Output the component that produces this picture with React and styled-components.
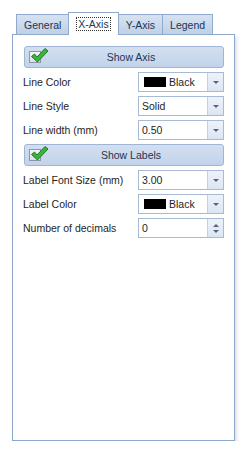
import styled, { createGlobalStyle, css } from 'styled-components';

const GlobalStyle = createGlobalStyle`
  body {
    margin: 0;
    background: #ffffff;
    font-family: 'Liberation Sans', Arial, sans-serif;
    font-size: 10.5px;
    color: #1e1e1e;
  }
`;

const Page = styled.div`
  padding: 12px 0 0 12px;
  width: 223px;
`;

const TabStrip = styled.div`
  align-items: flex-end;
  display: flex;
  height: 22px;
  padding-left: 4px;
  position: relative;
  z-index: 1;
`;

const Tab = styled.div`
  align-items: center;
  background: linear-gradient(#d6e2f1, #bfd1e8);
  border: 1px solid #8fa9cf;
  border-bottom: none;
  color: #1e3454;
  display: flex;
  height: 19px;
  margin-left: -1px;
  padding: 0 7px;

  &:first-child {
    margin-left: 0;
  }

  ${({ $active }) => $active && css`
    background: #ffffff;
    height: 22px;
    margin-bottom: -1px;
    padding: 0 8px;
    position: relative;
    z-index: 2;
  `}
`;

const FocusLabel = styled.span`
  outline: 1px dotted #333;
  outline-offset: 0;
  padding: 0 1px;
`;

const Panel = styled.div`
  border: 1px solid #8ca7cd;
  box-shadow: 2px 2px 3px rgba(0, 0, 0, 0.12);
  box-sizing: border-box;
  display: flex;
  flex-direction: column;
  gap: 4px;
  height: 407px;
  padding: 11px 10px 0 11px;
`;

const SectionButton = styled.div`
  align-items: center;
  background: linear-gradient(#d3dff0, #c2d3ea);
  border: 1px solid #9fb5d4;
  border-radius: 3px;
  box-sizing: border-box;
  display: flex;
  height: 22px;
  position: relative;
`;

const CheckBox = styled.span`
  background: linear-gradient(#f3f6fa, #d9e0ea);
  border: 1px solid #8b97a6;
  box-sizing: border-box;
  height: 12px;
  margin-left: 4px;
  position: relative;
  width: 12px;

  svg {
    left: 0;
    position: absolute;
    top: -5px;
  }
`;

const ButtonText = styled.span`
  color: #1e3454;
  flex: 1;
  padding-right: 2px;
  text-align: center;
`;

const Row = styled.div`
  align-items: center;
  display: flex;
  height: 20px;
  justify-content: space-between;
`;

const Label = styled.span`
  margin-left: -1px;
`;

const Editor = styled.div`
  background: #ffffff;
  border: 1px solid #a7bbd7;
  box-sizing: border-box;
  display: flex;
  height: 20px;
  width: 86px;
`;

const Value = styled.div`
  align-items: center;
  display: flex;
  flex: 1;
  gap: 3px;
  padding-left: 3px;
`;

const Swatch = styled.span`
  background: #000000;
  height: 10px;
  margin-left: 2px;
  width: 22px;
`;

const DropButton = styled.div`
  align-items: center;
  background: linear-gradient(#eef3fa, #dbe5f2);
  border-left: 1px solid #c3d1e5;
  display: flex;
  flex-direction: column;
  gap: 3px;
  justify-content: center;
  width: 15px;
`;

const Arrow = styled.span`
  border-left: 3px solid transparent;
  border-right: 3px solid transparent;
  ${({ $up }) => $up
    ? css`border-bottom: 3px solid #56657a;`
    : css`border-top: 3px solid #56657a;`}
  height: 0;
  width: 0;
`;

function Check() {
  return (
    <svg width="20" height="17" viewBox="0 0 20 17">
      <path
        d="M1.5 9.5 L4.5 7 L7 10 L15 1.5 L18 4 L7.5 15 Z"
        fill="#3cb43c"
        stroke="#1f7a24"
        strokeWidth="1"
        strokeLinejoin="round"
      />
    </svg>
  );
}

function Section({ title }) {
  return (
    <SectionButton>
      <CheckBox><Check /></CheckBox>
      <ButtonText>{title}</ButtonText>
    </SectionButton>
  );
}

function Combo({ value, color, spin }) {
  return (
    <Editor>
      <Value>
        {color && <Swatch />}
        {value}
      </Value>
      <DropButton>
        {spin ? (
          <>
            <Arrow $up />
            <Arrow />
          </>
        ) : (
          <Arrow />
        )}
      </DropButton>
    </Editor>
  );
}

const tabs = ['General', 'X-Axis', 'Y-Axis', 'Legend'];

export default function App() {
  return (
    <Page>
      <GlobalStyle />
      <TabStrip>
        {tabs.map((t) => (
          <Tab key={t} $active={t === 'X-Axis'}>
            {t === 'X-Axis' ? <FocusLabel>{t}</FocusLabel> : t}
          </Tab>
        ))}
      </TabStrip>
      <Panel>
        <Section title="Show Axis" />
        <Row>
          <Label>Line Color</Label>
          <Combo value="Black" color />
        </Row>
        <Row>
          <Label>Line Style</Label>
          <Combo value="Solid" />
        </Row>
        <Row>
          <Label>Line width (mm)</Label>
          <Combo value="0.50" />
        </Row>
        <Section title="Show Labels" />
        <Row>
          <Label>Label Font Size (mm)</Label>
          <Combo value="3.00" />
        </Row>
        <Row>
          <Label>Label Color</Label>
          <Combo value="Black" color />
        </Row>
        <Row>
          <Label>Number of decimals</Label>
          <Combo value="0" spin />
        </Row>
      </Panel>
    </Page>
  );
}
